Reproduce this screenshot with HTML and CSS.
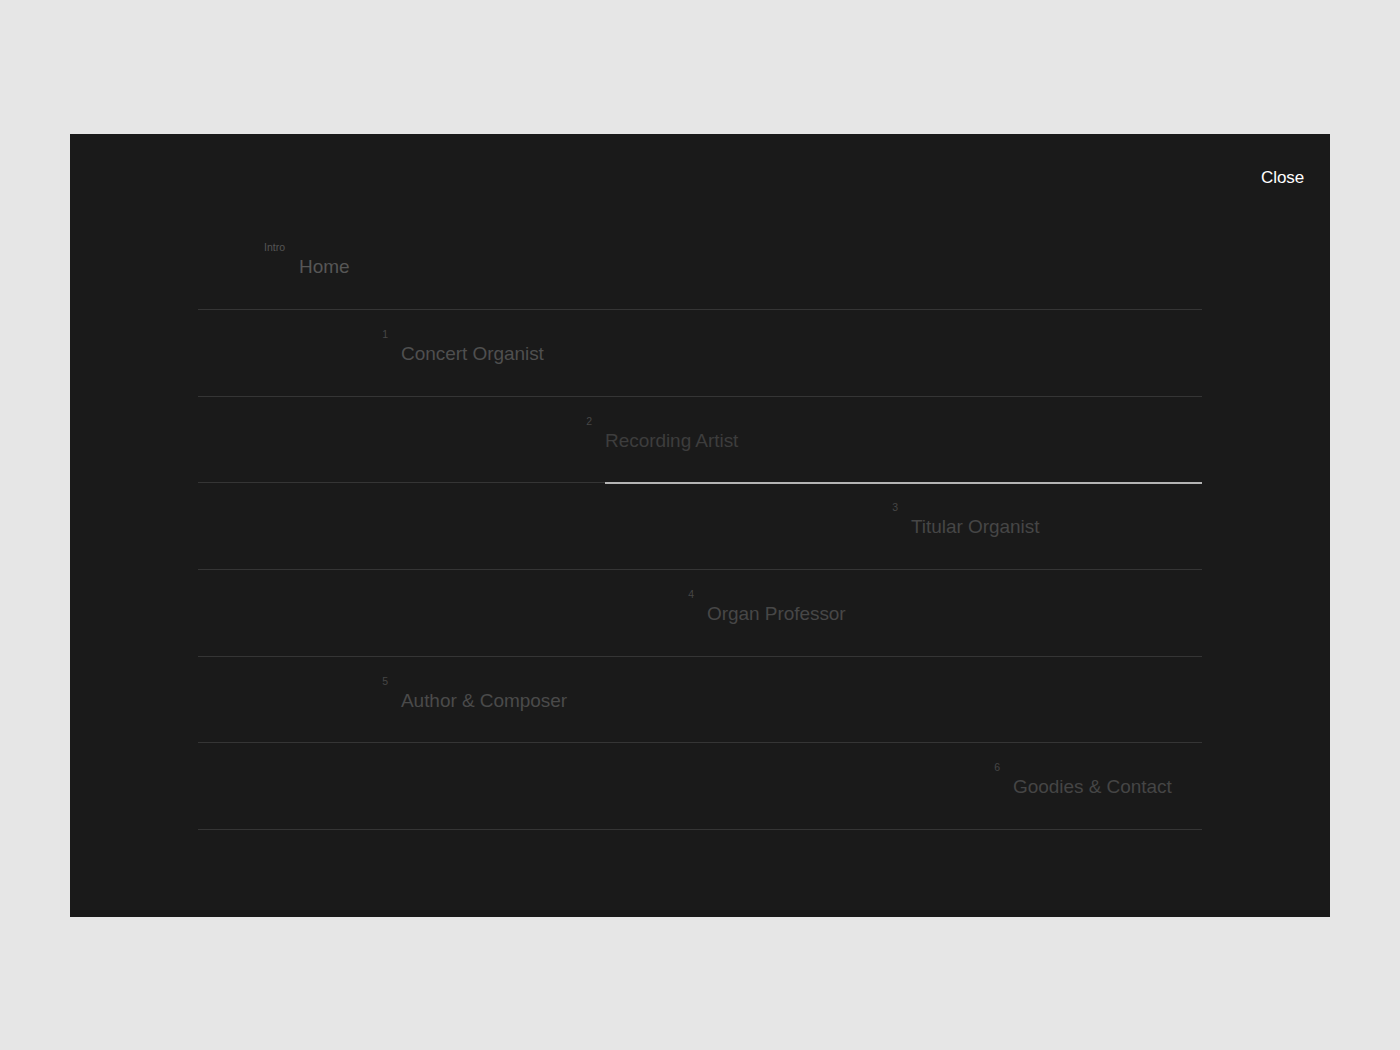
FILE: index.html
```html
<!DOCTYPE html>
<html lang="en">
<head>
<meta charset="utf-8">
<title>Menu</title>
<link rel="stylesheet" href="styles.css">
</head>
<body>
<div class="stage">
  <div class="panel">
    <header class="top">
      <a class="close" href="#">Close</a>
    </header>
    <nav class="menu">
      <div class="row row-home">
        <a class="item col-1" href="#"><span class="tag">Intro</span><span class="name">Home</span></a>
      </div>
      <div class="row row-concert">
        <a class="item col-2" href="#"><span class="tag">1</span><span class="name">Concert Organist</span></a>
      </div>
      <div class="row row-recording active">
        <a class="item col-4" href="#"><span class="tag">2</span><span class="name">Recording Artist</span></a>
      </div>
      <div class="row row-titular">
        <a class="item col-7" href="#"><span class="tag">3</span><span class="name">Titular Organist</span></a>
      </div>
      <div class="row row-organ">
        <a class="item col-5" href="#"><span class="tag">4</span><span class="name">Organ Professor</span></a>
      </div>
      <div class="row row-author">
        <a class="item col-2" href="#"><span class="tag">5</span><span class="name">Author &amp; Composer</span></a>
      </div>
      <div class="row row-goodies">
        <a class="item col-8" href="#"><span class="tag">6</span><span class="name">Goodies &amp; Contact</span></a>
      </div>
    </nav>
  </div>
</div>
</body>
</html>
```

FILE: styles.css
```css
* { box-sizing: border-box; }

html, body {
  margin: 0;
  padding: 0;
}

body {
  background: #e6e6e6;
  font-family: "Liberation Sans", Arial, sans-serif;
}

.stage {
  height: 100vh;
  display: flex;
  align-items: center;
  justify-content: center;
}

.panel {
  width: 1260px;
  height: 783px;
  background: #1a1a1a;
  display: flex;
  flex-direction: column;
}

.top {
  display: flex;
  justify-content: flex-end;
  padding: 34px 26px 0 0;
  height: 90px;
}

.close {
  color: #ffffff;
  font-size: 17px;
  line-height: 20px;
  text-decoration: none;
  letter-spacing: -0.1px;
}

.menu {
  margin: 0 128px;
  display: flex;
  flex-direction: column;
}

.row {
  position: relative;
  height: 86.67px;
  border-bottom: 1px solid #353535;
  display: flex;
  align-items: center;
}

.item {
  position: relative;
  text-decoration: none;
  display: block;
  padding-top: 2px;
}

.col-1 { margin-left: 101px; }
.col-2 { margin-left: 203px; }
.col-4 { margin-left: 407px; }
.col-5 { margin-left: 509px; }
.col-7 { margin-left: 713px; }
.col-8 { margin-left: 815px; }

.name {
  display: block;
  font-size: 19px;
  line-height: 22px;
  letter-spacing: -0.05px;
  color: #4a4a4a;
}

.tag {
  position: absolute;
  right: 100%;
  bottom: 100%;
  margin-right: 13px;
  margin-bottom: 1px;
  font-size: 10.5px;
  line-height: 12px;
  color: #464646;
  white-space: nowrap;
}

.row-home .tag { color: #555555; margin-right: 14px; }
.row-home .name { color: #565656; }
.row-concert .name { color: #4f4f4f; }
.row-recording .name { color: #3d3d3d; }
.row-titular .name { color: #464646; }
.row-organ .name { color: #474747; }
.row-author .name { color: #4a4a4a; }
.row-goodies .name { color: #454545; }

.row.active::after {
  content: "";
  position: absolute;
  left: 407px;
  right: 0;
  bottom: -1.5px;
  height: 2px;
  background: #b4b4b4;
}
```
